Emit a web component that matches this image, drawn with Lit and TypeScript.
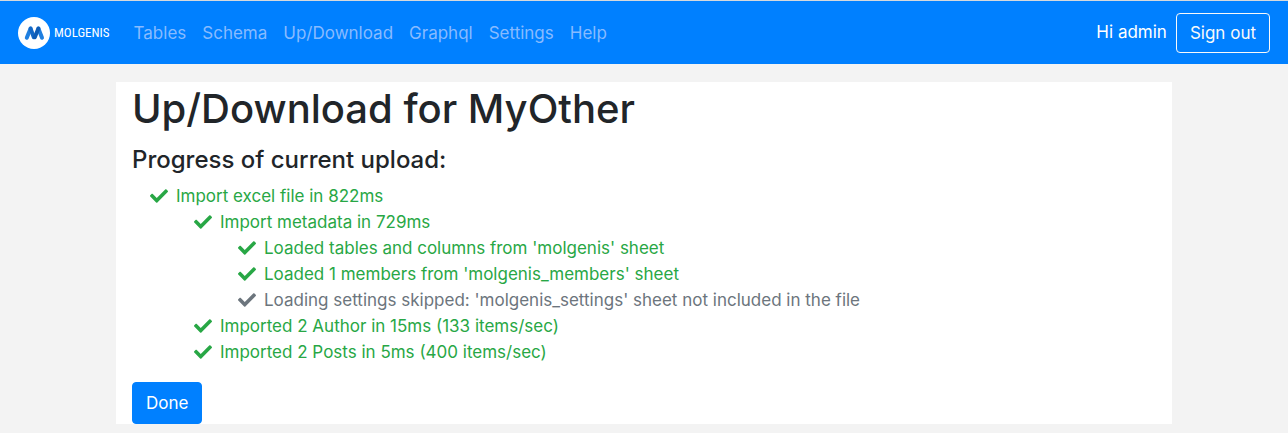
import { LitElement, html, css, svg, nothing, TemplateResult } from "lit";
import { customElement, property } from "lit/decorators.js";

type Status = "completed" | "skipped";

interface Step {
  text: string;
  status: Status;
  steps?: Step[];
}

const MENU = ["Tables", "Schema", "Up/Download", "Graphql", "Settings", "Help"];

const TASK: Step = {
  text: "Import excel file in 822ms",
  status: "completed",
  steps: [
    {
      text: "Import metadata in 729ms",
      status: "completed",
      steps: [
        { text: "Loaded tables and columns from 'molgenis' sheet", status: "completed" },
        { text: "Loaded 1 members from 'molgenis_members' sheet", status: "completed" },
        {
          text: "Loading settings skipped: 'molgenis_settings' sheet not included in the file",
          status: "skipped",
        },
      ],
    },
    { text: "Imported 2 Author in 15ms (133 items/sec)", status: "completed" },
    { text: "Imported 2 Posts in 5ms (400 items/sec)", status: "completed" },
  ],
};

const logoMark = svg`
  <circle cx="16" cy="16" r="16" fill="#fff" />
  <path d="M8.8 20.8 L12.6 11.6" stroke="#1f7fe0" />
  <path d="M20.4 11.6 L24 20.8" stroke="#1f7fe0" />
  <path d="M12.6 11.6 L15.8 20.2" stroke="#1468c6" />
  <path d="M16.8 20.2 L20.4 11.6" stroke="#0f5cb5" />
`;

@customElement("app-navbar")
class AppNavbar extends LitElement {
  static styles = css`
    :host {
      display: block;
    }
    .bar {
      display: flex;
      align-items: center;
      box-sizing: border-box;
      min-height: 64px;
      padding: 1px 18px 0;
      border-top: 1px solid #d5d9dd;
      background: #0080ff;
      color: #fff;
      font-size: 17px;
      line-height: 26px;
    }
    .brand {
      display: flex;
      align-items: center;
      gap: 4px;
      color: #fff;
      text-decoration: none;
    }
    .mark {
      width: 32px;
      height: 32px;
      fill: none;
      stroke-width: 4;
      stroke-linecap: round;
    }
    .name {
      font-family: "Roboto Condensed", "Liberation Sans Narrow", Roboto, sans-serif;
      font-size: 13px;
    }
    .menu {
      display: flex;
      flex: 1;
      gap: 16px;
      margin: 0;
      padding: 0 0 0 24px;
      list-style: none;
    }
    .link {
      color: #88bbff;
      text-decoration: none;
    }
    .user {
      display: flex;
      gap: 9px;
      align-items: center;
    }
    .greeting {
      padding-bottom: 3px;
    }
    .signout {
      padding: 6px 13px;
      border: 1px solid #f8f9fa;
      border-radius: 4px;
      background: transparent;
      color: #f8f9fa;
      font: inherit;
      cursor: pointer;
    }
  `;

  render() {
    return html`
      <nav class="bar">
        <a class="brand" href="#">
          <svg class="mark" viewBox="0 0 32 32" aria-hidden="true">${logoMark}</svg>
          <span class="name">MOLGENIS</span>
        </a>
        <ul class="menu">
          ${MENU.map((m) => html`<li><a class="link" href="#">${m}</a></li>`)}
        </ul>
        <div class="user">
          <span class="greeting">Hi admin</span>
          <button class="signout" type="button">Sign out</button>
        </div>
      </nav>
    `;
  }
}

@customElement("task-progress")
class TaskProgress extends LitElement {
  @property({ attribute: false }) task?: Step;

  static styles = css`
    :host {
      display: block;
    }
    .list {
      margin: 0;
      padding-left: 44px;
      list-style: none;
    }
    .row {
      display: flex;
      align-items: center;
      gap: 8px;
      margin-left: -26px;
    }
    .check {
      flex: none;
      width: 18px;
      height: 18px;
      fill: currentColor;
    }
    .completed {
      color: #28a745;
    }
    .skipped {
      color: #6c757d;
    }
  `;

  private list(steps: Step[]): TemplateResult {
    return html`
      <ul class="list">
        ${steps.map(
          (s) => html`
            <li>
              <div class="row ${s.status}">
                <svg class="check" viewBox="0 0 512 512" aria-hidden="true">
                  <path
                    d="M173.898 439.404l-166.4-166.4c-9.997-9.997-9.997-26.206 0-36.204l36.203-36.204c9.997-9.998 26.207-9.998 36.204 0L192 312.69 432.095 72.596c9.997-9.997 26.207-9.997 36.204 0l36.203 36.204c9.997 9.997 9.997 26.206 0 36.204l-294.4 294.401c-9.998 9.997-26.207 9.997-36.204-.001z"
                  />
                </svg>
                <span>${s.text}</span>
              </div>
              ${s.steps ? this.list(s.steps) : nothing}
            </li>
          `
        )}
      </ul>
    `;
  }

  render() {
    return this.task ? this.list([this.task]) : nothing;
  }
}

@customElement("app-root")
class AppRoot extends LitElement {
  static styles = css`
    :host {
      display: block;
      min-height: 100vh;
      background: #f3f3f3;
      color: #212529;
      font-family: Inter, "Liberation Sans", sans-serif;
      font-size: 17px;
      line-height: 26px;
    }
    .container {
      box-sizing: border-box;
      max-width: 1056px;
      margin: 18px auto 0;
      padding: 0 16px;
      background: #fff;
    }
    .page {
      display: flow-root;
    }
    .title {
      margin: 0 0 8px;
      font-size: 40px;
      font-weight: 500;
      line-height: 54px;
    }
    .subtitle {
      margin: 0 0 8px;
      font-size: 24px;
      font-weight: 500;
      line-height: 31px;
    }
    .done {
      display: block;
      margin-top: 17px;
      padding: 7px 13px;
      border: 1px solid #0080ff;
      border-radius: 4px;
      background: #0080ff;
      color: #fff;
      font: inherit;
      cursor: pointer;
    }
  `;

  render() {
    return html`
      <div class="page">
        <app-navbar></app-navbar>
        <main class="container">
          <h1 class="title">Up/Download for MyOther</h1>
          <h4 class="subtitle">Progress of current upload:</h4>
          <task-progress .task=${TASK}></task-progress>
          <button class="done" type="button">Done</button>
        </main>
      </div>
    `;
  }
}
